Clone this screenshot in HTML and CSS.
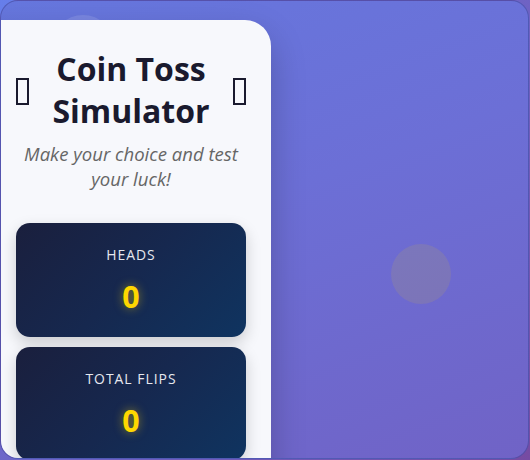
FILE: index.html
```html
<!DOCTYPE html>
<html lang="en">
<head>
    <meta charset="UTF-8">
    <meta name="viewport" content="width=device-width, initial-scale=1.0">
    <title>Coin Toss Simulator</title>
    <link rel="stylesheet" href="styles.css">
</head>
<body>
    <div class="app">
        <span class="floating-coin coin-a"></span>
        <span class="floating-coin coin-b"></span>

        <div class="game-card">
            <div class="game-header">
                <h1>
                    <span class="title-icon"></span>
                    <span class="title-text">Coin Toss Simulator</span>
                    <span class="title-icon"></span>
                </h1>
                <p>Make your choice and test your luck!</p>
            </div>

            <div class="stats">
                <div class="stat-box">
                    <span class="stat-label">Heads</span>
                    <span class="stat-value">0</span>
                </div>
                <div class="stat-box">
                    <span class="stat-label">Total Flips</span>
                    <span class="stat-value">0</span>
                </div>
            </div>
        </div>
    </div>
</body>
</html>
```

FILE: styles.css
```css
* {
    margin: 0;
    padding: 0;
    box-sizing: border-box;
    font-family: 'Open Sans', 'Noto Sans', sans-serif;
}

body {
    height: 100vh;
    background: linear-gradient(135deg, #667eea 0%, #764ba2 100%);
    overflow: hidden;
}

.app {
    width: 529px;
    height: 459px;
    border-radius: 18px;
    border: 1px solid rgba(40, 40, 110, 0.35);
    background: linear-gradient(160deg, #6677de 0%, #6c6fd6 45%, #7063c6 100%);
    overflow: hidden;
    position: relative;
    padding-top: 19px;
}

.floating-coin {
    position: absolute;
    width: 60px;
    height: 60px;
    border-radius: 50%;
    background: rgba(255, 215, 0, 0.1);
    z-index: 2;
    pointer-events: none;
}

.coin-a { top: 14px; left: 51px; width: 62px; height: 62px; background: rgba(255, 255, 255, 0.12); z-index: 0; }
.coin-b { top: 243px; left: 390px; }

.game-card {
    width: 311px;
    margin-left: -41px;
    min-height: 480px;
    padding: 28px 25px 30px 56px;
    background: #f7f8fc;
    border-radius: 26px;
    box-shadow: 0 15px 35px rgba(0, 0, 0, 0.22);
    position: relative;
    z-index: 1;
}

.game-header {
    text-align: center;
    margin-bottom: 32px;
}

.game-header h1 {
    display: flex;
    align-items: center;
    justify-content: center;
    gap: 8px;
    color: #1a1a2e;
    font-size: 2rem;
    font-weight: 700;
    line-height: 1.3;
    margin-bottom: 10px;
}

/* coin glyph placeholder box */
.title-icon {
    flex: none;
    width: 13px;
    height: 27px;
    margin-top: 4px;
    border: 2px solid #1a1a2e;
}

.title-text {
    flex: 1;
}

.game-header p {
    color: #666;
    font-size: 1.16rem;
    font-style: italic;
    line-height: 1.35;
}

.stats {
    display: flex;
    flex-direction: column;
    gap: 10px;
}

.stat-box {
    display: flex;
    flex-direction: column;
    align-items: center;
    gap: 18px;
    padding: 22px 15px 24px;
    border-radius: 14px;
    background: linear-gradient(135deg, #1a1f3d 0%, #16284f 50%, #0f3460 100%);
    box-shadow: 0 6px 15px rgba(0, 0, 0, 0.18);
}

.stat-label {
    color: #e6e8ef;
    font-size: 0.87rem;
    text-transform: uppercase;
    letter-spacing: 1px;
}

.stat-value {
    color: #ffd700;
    font-size: 1.9rem;
    font-weight: 700;
    line-height: 1;
    text-shadow: 0 0 10px rgba(255, 215, 0, 0.5);
}
```
